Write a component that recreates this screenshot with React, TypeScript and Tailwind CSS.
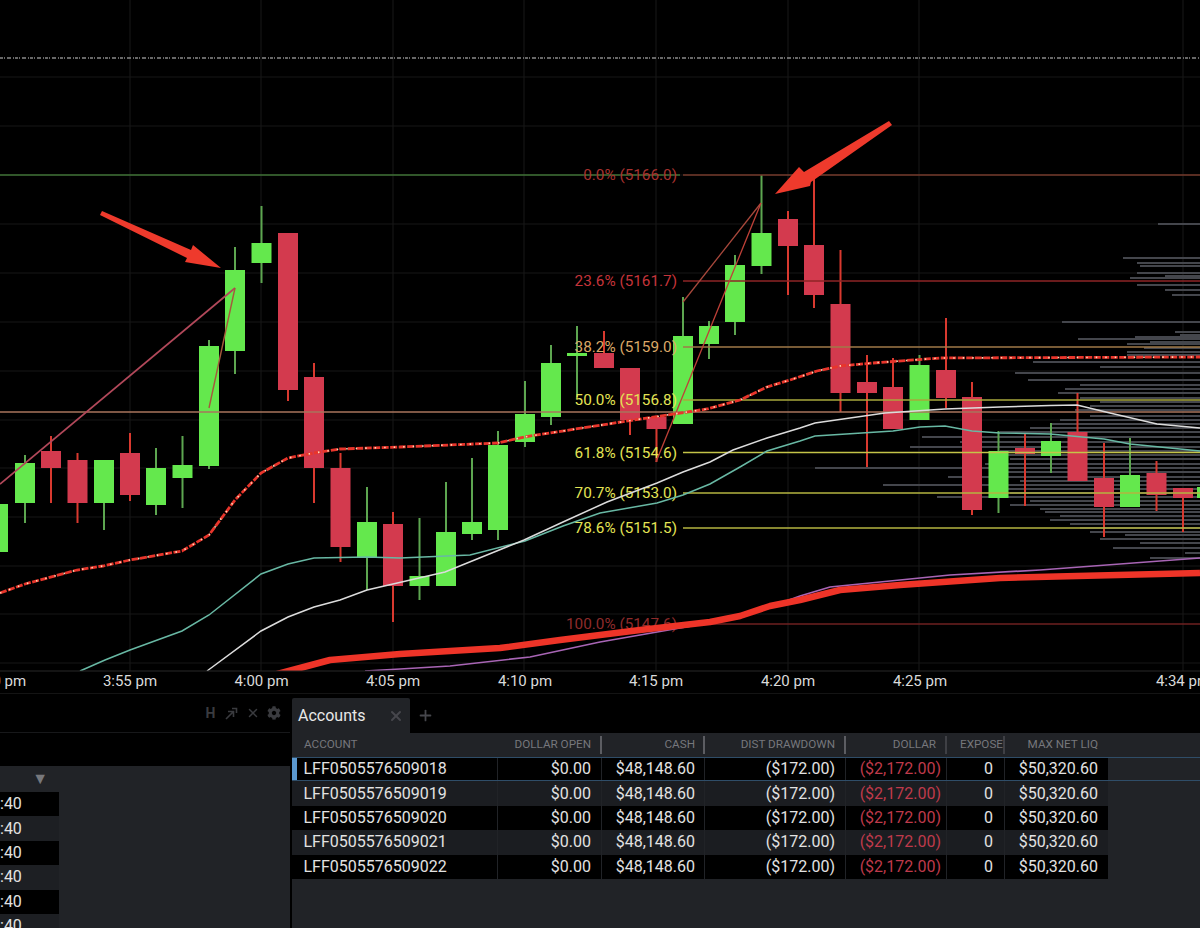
import { FaCog } from "react-icons/fa";
import { X, Plus } from "lucide-react";

// x, open/top of body, bottom of body, wick top, wick bottom, up?
type Candle = [number, number, number, number, number, boolean];

const candles: Candle[] = [
  [-2, 504, 552, 504, 552, true],
  [25, 463, 503, 455, 523, true],
  [51, 451, 468, 436, 503, false],
  [77.5, 460, 503, 453, 523, false],
  [104, 460, 503, 460, 530, true],
  [130, 453, 495, 433, 501, false],
  [156, 468, 505, 448, 515, true],
  [182.5, 465, 478, 436, 508, true],
  [209, 346, 466, 340, 469, true],
  [235, 270, 351, 247, 374, true],
  [261.5, 243, 263, 206, 283, true],
  [288, 233, 390, 233, 401, false],
  [314, 377, 468, 363, 503, false],
  [340.5, 468, 547, 453, 562, false],
  [367, 522, 557, 487, 590, true],
  [393, 524, 586, 512, 622, false],
  [419.5, 576, 586, 518, 600, true],
  [446, 532, 586, 482, 586, true],
  [472, 522, 534, 458, 540, true],
  [498, 445, 530, 431, 540, true],
  [525, 414, 442, 381, 447, true],
  [551, 363, 417, 345, 425, true],
  [577, 353, 356, 326, 397, true],
  [604, 353, 368, 331, 368, false],
  [630, 368, 420, 368, 435, false],
  [656.5, 417, 429, 417, 462, false],
  [683, 336, 424, 297, 424, true],
  [709, 326, 344, 321, 359, true],
  [735, 265, 322, 255, 335, true],
  [761.5, 233, 266, 175, 274, true],
  [788, 219, 246, 211, 295, false],
  [814, 245, 295, 179, 308, false],
  [840.5, 304, 393, 250, 412, false],
  [867, 382, 393, 355, 467, false],
  [893, 387, 429, 358, 429, false],
  [919.5, 365, 420, 355, 420, true],
  [946, 370, 398, 318, 408, false],
  [972, 397, 510, 382, 515, false],
  [998.5, 451, 498, 431, 513, true],
  [1025, 448, 454, 433, 506, false],
  [1051, 441, 456, 423, 473, true],
  [1077.5, 432, 481, 393, 481, false],
  [1104, 478, 507, 443, 537, false],
  [1130, 475, 507, 438, 507, true],
  [1156.5, 473, 495, 461, 511, false],
  [1183, 488, 498, 488, 532, false],
  [1207, 487, 498, 480, 505, true],
];

// volume profile, [y, x where the bar starts]
const volume: number[][] = [
  [224, 1158], [258, 1123], [263, 1137], [266, 1140], [273, 1137], [276, 1165], [278, 1130], [285, 1137],
  [290, 1165], [295, 1172], [322, 1062], [332, 1175], [335, 1180], [337, 1135], [339, 1078], [342, 1150],
  [344, 1127], [348, 1144], [352, 1127], [355, 1127], [362, 1033], [367, 1100], [373, 1015], [380, 1028],
  [385, 1080], [389, 1065], [393, 1058], [398, 1080], [402, 1100], [406, 1090], [410, 1075], [416, 1090],
  [420, 1060], [424, 1050], [428, 1030], [432, 1000], [437, 922], [442, 960], [447, 910], [451, 1000],
  [455, 990], [459, 1010], [464, 985], [468, 815], [472, 1000], [477, 948], [481, 1020], [485, 883],
  [489, 1000], [493, 1010], [497, 937], [501, 1030], [505, 1010], [509, 1040], [512, 1045], [516, 1060],
  [520, 1050], [524, 1070], [528, 1080], [532, 1090], [535, 1125], [539, 1100], [543, 1140], [548, 1113],
  [553, 1185], [558, 1150],
];

const gridX = [130, 261, 393, 524, 656, 788, 919, 1183];
const gridY = [77, 126, 175, 224, 273, 322, 371, 420, 468, 517, 566, 614, 663];
const timeLabels = [
  ["3:50 pm", -1],
  ["3:55 pm", 130],
  ["4:00 pm", 261.5],
  ["4:05 pm", 393],
  ["4:10 pm", 525],
  ["4:15 pm", 656],
  ["4:20 pm", 788],
  ["4:25 pm", 920],
  ["4:34 pm", 1183],
] as const;

const fibs = [
  { label: "0.0% (5166.0)", y: 175, text: "#a8322f", line: "#743a2b" },
  { label: "23.6% (5161.7)", y: 281, text: "#c5343a", line: "#8e2426" },
  { label: "38.2% (5159.0)", y: 347, text: "#dba867", line: "#a07a48" },
  { label: "50.0% (5156.8)", y: 400, text: "#e4e455", line: "#a8a83c" },
  { label: "61.8% (5154.6)", y: 452.5, text: "#e4e455", line: "#c4c448" },
  { label: "70.7% (5153.0)", y: 493, text: "#e4e455", line: "#b4b440" },
  { label: "78.6% (5151.5)", y: 528, text: "#e4e455", line: "#b4b440" },
  { label: "100.0% (5147.6)", y: 624, text: "#8e2b2b", line: "#6e2020" },
];

const vwap =
  "0,593 25,584 77,570 103,566 130,560 182,551 209,535 235,500 261,473 288,458 314,453 340,449 400,447 498,443 524,437 608,424 667,415 707,409 740,400 767,387 790,380 817,371 840,366 873,363 940,358 1200,357";
const whiteLine =
  "207,671 261,631 288,617 314,607 340,600 367,590 393,584 445,572 524,540 563,522 607,502 657,483 683,472 710,462 733,450 767,438 800,428 815,423 885,413 945,409 1000,407 1050,405.5 1077,405 1110,413 1157,424 1200,428";
const tealLine =
  "80,671 105,660 130,650 182,631 209,615 261,574 288,564 314,558 367,557 400,558 470,555 525,541 563,526 600,513 657,503 683,495 710,484 740,467 767,451 800,441 815,436 893,431 920,427 945,426 972,431 1000,433 1050,434 1104,439 1130,444 1200,451";
const purpleLine =
  "365,671 400,669 450,666 530,657 600,642 680,628 740,618 800,596 830,587 950,575 1040,570 1200,558";
const thickLine =
  "270,676 330,660 400,654 500,648 560,640 640,630 710,622 740,616 770,606 800,600 840,590 900,585 1000,578 1200,573";

const Chart = () => (
  <svg width="1200" height="694" viewBox="0 0 1200 694" className="block shrink-0">
    {gridX.map((x) => (
      <line key={x} x1={x} x2={x} y1={0} y2={671} stroke="#191919" />
    ))}
    {gridY.map((y) => (
      <line key={y} x1={0} x2={1200} y1={y} y2={y} stroke="#171717" />
    ))}
    <line x1={0} x2={1200} y1={58} y2={58} stroke="#8a8a8a" strokeWidth="1.5" strokeDasharray="3 1 1 2 4 2 1 1" />

    {volume.map(([y, x]) => (
      <line key={y} x1={x} x2={1200} y1={y} y2={y} stroke="#44464c" strokeWidth="2" />
    ))}

    {candles.map(([x, top, bottom, hi, lo, up]) => (
      <g key={x}>
        <line x1={x} x2={x} y1={hi} y2={lo} stroke={up ? "#5da650" : "#d9392f"} strokeWidth="2" />
        <rect x={x - 10} y={top} width={20} height={bottom - top} fill={up ? "#64e84d" : "#d33a4e"} />
      </g>
    ))}

    <line x1={0} x2={680} y1={175} y2={175} stroke="#3f7236" strokeWidth="1.4" />
    <line x1={0} x2={1200} y1={412} y2={412} stroke="#a8755c" strokeWidth="1.4" />
    {fibs.map((f) => (
      <g key={f.label}>
        <line x1={683} x2={1200} y1={f.y} y2={f.y} stroke={f.line} strokeWidth="1.6" />
        <text x={677} y={f.y + 5} textAnchor="end" fontSize="15.3" fill={f.text}>
          {f.label}
        </text>
      </g>
    ))}

    <polyline points="0,484 235,288" fill="none" stroke="#b2485a" strokeWidth="1.7" />
    <polyline points="209,408 235,288" fill="none" stroke="#a5583c" strokeWidth="1.4" />
    <polyline points="683,302 761,203" fill="none" stroke="#a8483c" strokeWidth="1.3" />
    <polyline points="656,462 761,203" fill="none" stroke="#bf4038" strokeWidth="1.3" />

    <polyline points={purpleLine} fill="none" stroke="#a865b5" strokeWidth="1.7" />
    <polyline points={thickLine} fill="none" stroke="#ee3428" strokeWidth="6.5" strokeLinejoin="round" />
    <polyline points={tealLine} fill="none" stroke="#68b8a4" strokeWidth="1.5" />
    <polyline points={whiteLine} fill="none" stroke="#dcdcdc" strokeWidth="1.5" />
    <polyline points={vwap} fill="none" stroke="#e8352b" strokeWidth="2.8" strokeDasharray="7 1.5" />
    <polyline points={vwap} fill="none" stroke="#ffd9b8" strokeWidth="1.6" strokeDasharray="1.5 8" />

    {/* hand drawn arrows */}
    <polygon points="102,211 191,250 193,245 221,268 185,262 187,258 100,215" fill="#ee3a2c" />
    <polygon points="889,121 804,172 799,167 775,194 810,186 811,182 892,125" fill="#ee3a2c" />

    {/* axis band hides what runs below the plot */}
    <rect x={0} y={671} width={1200} height={23} fill="#000" />
    <line x1={0} x2={1200} y1={671} y2={671} stroke="#282828" />
    <line x1={0} x2={1200} y1={693.5} y2={693.5} stroke="#141414" />

    {timeLabels.map(([label, x]) => (
      <text key={label} x={x} y={686} textAnchor="middle" fontSize="15" fill="#dadada">
        {label}
      </text>
    ))}
  </svg>
);

const columns = [
  { title: "ACCOUNT", w: "w-[206px]", pad: "pl-[12px]" },
  { title: "DOLLAR OPEN", w: "w-[104px]", pad: "pr-[9px]" },
  { title: "CASH", w: "w-[103px]", pad: "pr-[8px]" },
  { title: "DIST DRAWDOWN", w: "w-[141px]", pad: "pr-[9px]" },
  { title: "DOLLAR", w: "w-[101px]", pad: "pr-[9px]" },
  { title: "EXPOSE", w: "w-[58px]", pad: "pr-0" },
  { title: "MAX NET LIQ", w: "w-[104px]", pad: "pr-[11px]" },
];

const accounts = ["018", "019", "020", "021", "022"];

const LeftPanel = () => (
  <div className="flex w-[290px] shrink-0 flex-col">
    <div className="flex h-[39px] shrink-0 items-center justify-end border-b border-[#17181a] pr-[6px] text-[#3a3b3f]">
      <span className="flex w-[21px] justify-center text-[14px] font-bold leading-none">H</span>
      <span className="flex w-[21px] justify-center">
        <svg width="13" height="13" viewBox="0 0 13 13" fill="none" stroke="currentColor" strokeWidth="1.6">
          <path d="M1 12 L8 5 M3 4.5 H8.5 V10 M7 1.5 H11.5 V6" />
        </svg>
      </span>
      <span className="flex w-[21px] justify-center">
        <X size={14} strokeWidth={2.5} />
      </span>
      <span className="flex w-[21px] justify-center">
        <FaCog size={14} />
      </span>
    </div>
    <div className="h-[33px] shrink-0" />
    <div className="min-h-0 flex-1 overflow-hidden bg-[#212327]">
      <div className="flex h-[26px] w-[59px] items-center justify-end pr-[11px] text-[16px] text-[#77787c]">▼</div>
      {[0, 1, 2, 3, 4, 5].map((i) => (
        <div
          key={i}
          className={`flex h-[24.4px] w-[59px] items-center text-[16px] text-[#e2e2e2] ${
            i % 2 === 0 ? "bg-black" : "bg-[#1d1f23]"
          }`}
        >
          :40
        </div>
      ))}
    </div>
  </div>
);

const AccountsPanel = () => (
  <div className="ml-[2px] flex min-w-0 flex-1 flex-col">
    <div className="flex h-[39px] shrink-0 items-end">
      <div className="flex h-[35px] w-[118px] items-center justify-between rounded-t-[2px] bg-[#212327] pl-[6px] pr-[6px]">
        <span className="text-[16px] leading-none text-[#e8e8e8]">Accounts</span>
        <X size={16} strokeWidth={3} className="text-[#46474c]" />
      </div>
      <Plus size={17} strokeWidth={2.5} className="mb-[9px] ml-[6.5px] text-[#46474c]" />
    </div>
    <div className="min-h-0 flex-1 bg-[#212327]">
      <div className="flex h-[24px]">
        {columns.map((col, i) => (
          <div key={col.title} className={`flex items-center ${col.w} ${i === 0 ? "justify-start" : "justify-end"}`}>
            <span className={`overflow-hidden whitespace-nowrap text-[11.7px] text-[#76777c] ${col.pad}`}>
              {col.title}
            </span>
            {i > 0 && i < 6 && (
              <span className={`h-[18px] w-[2px] shrink-0 ${i < 4 ? "bg-[#5c5d62]" : "bg-[#3f4045]"}`} />
            )}
          </div>
        ))}
      </div>
      {accounts.map((suffix, i) => (
        <div
          key={suffix}
          className={`relative flex h-[24.4px] items-stretch text-[16px] text-[#e2e2e2] ${
            i === 0 ? "border-y border-[#2f4d68]" : ""
          }`}
        >
          {i === 0 && <span className="absolute bottom-0 left-0 top-0 w-[5px] bg-[#5b98cf]" />}
          {[
            { text: `LFF0505576509${suffix}`, w: "w-[206px]", cls: "justify-start pl-[11.5px]" },
            { text: "$0.00", w: "w-[104px]", cls: "justify-end pr-[10px]" },
            { text: "$48,148.60", w: "w-[103px]", cls: "justify-end pr-[9px]" },
            { text: "($172.00)", w: "w-[141px]", cls: "justify-end pr-[10px]" },
            { text: "($2,172.00)", w: "w-[101px]", cls: "justify-end pr-[5px] text-[#bf3a4b]" },
            { text: "0", w: "w-[58px]", cls: "justify-end pr-[11px]" },
            { text: "$50,320.60", w: "w-[104px]", cls: "justify-end pr-[10px]" },
          ].map((cell) => (
            <div
              key={cell.w + cell.cls}
              className={`flex items-center border-r border-[#212327] ${cell.w} ${cell.cls} ${
                i % 2 === 0 ? "bg-black" : "bg-[#1b1d21]"
              }`}
            >
              {cell.text}
            </div>
          ))}
        </div>
      ))}
    </div>
  </div>
);

export default function App() {
  return (
    <div className="flex h-[928px] w-[1200px] flex-col overflow-hidden bg-black font-[Roboto,sans-serif]">
      <Chart />
      <div className="flex min-h-0 flex-1">
        <LeftPanel />
        <AccountsPanel />
      </div>
    </div>
  );
}
